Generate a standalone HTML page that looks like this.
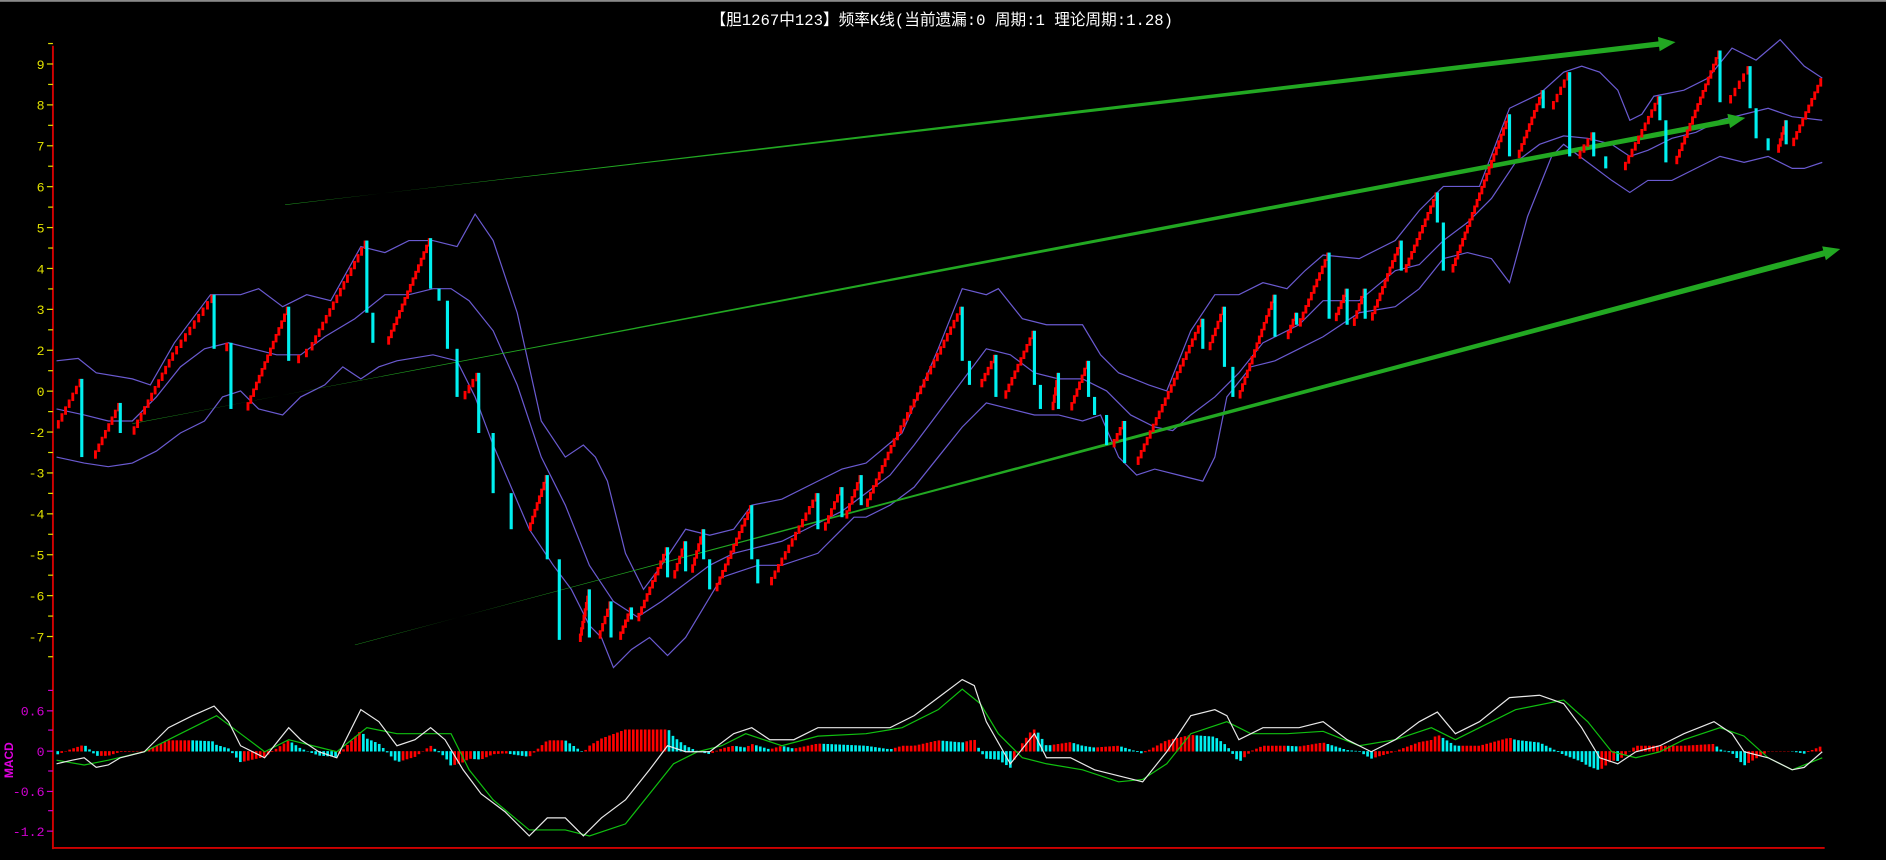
<!DOCTYPE html>
<html><head><meta charset="utf-8"><style>
html,body{margin:0;padding:0;background:#000;overflow:hidden}
svg{display:block}
</style></head><body>
<svg id="s" width="1886" height="860" viewBox="0 0 1568 715" preserveAspectRatio="none" xmlns="http://www.w3.org/2000/svg">
<rect width="1568" height="715" fill="#000"/>
<rect width="1568" height="1.5" fill="#8a8a8a"/>
<text x="783" y="21" fill="#fff" font-size="13" text-anchor="middle" font-family="Liberation Mono, 'Noto Sans CJK SC', monospace">【胆1267中123】频率K线(当前遗漏:0 周期:1 理论周期:1.28)</text>
<g id="axis"></g>
<g id="bands" fill="none" stroke="#6a5ad0" stroke-width="1"></g>
<g id="arrows" fill="#22a822"></g>
<g id="candles"></g>
<g id="macd"></g>
</svg>
<script>
var NS="http://www.w3.org/2000/svg";
function el(p,t,a){var e=document.createElementNS(NS,t);for(var k in a)e.setAttribute(k,a[k]);document.getElementById(p).appendChild(e);return e;}
function P(s){var a=s.trim().split(/\s+/).map(function(q){return q.split(',').map(Number)});return a;}
function pts(a){return a.map(function(p){return p.join(',')}).join(' ');}
el('axis','line',{x1:44,y1:38,x2:44,y2:706,stroke:'#d00000','stroke-width':1.6});
el('axis','line',{x1:44,y1:705,x2:1517,y2:705,stroke:'#d00000','stroke-width':1.6});
var labs=['9','8','7','6','5','4','3','2','0','-2','-3','-4','-5','-6','-7'];
for(var i=0;i<labs.length;i++){var y=53.2+i*34;
 el('axis','line',{x1:39,y1:y,x2:44,y2:y,stroke:'#e0e000','stroke-width':1});
 el('axis','line',{x1:40,y1:y-17,x2:44,y2:y-17,stroke:'#e0e000','stroke-width':1});
 var t=el('axis','text',{x:37,y:y+4,fill:'#e0e000','font-size':11,'text-anchor':'end','font-family':'Liberation Mono, monospace'});t.textContent=labs[i];}
el('axis','line',{x1:40,y1:546,x2:44,y2:546,stroke:'#e0e000','stroke-width':1});
var ml=[['0.6',591],['0',624.5],['-0.6',658],['-1.2',691]];
ml.forEach(function(m){el('axis','line',{x1:39,y1:m[1],x2:44,y2:m[1],stroke:'#d000d0','stroke-width':1});
 var t=el('axis','text',{x:37,y:m[1]+4,fill:'#d000d0','font-size':11,'text-anchor':'end','font-family':'Liberation Mono, monospace'});t.textContent=m[0];});
[574,607,641,674].forEach(function(y){el('axis','line',{x1:40,y1:y,x2:44,y2:y,stroke:'#d000d0','stroke-width':1});});
var mt=el('axis','text',{x:0,y:0,fill:'#e000e0','font-size':10,'font-weight':'bold','text-anchor':'middle','font-family':'Liberation Sans, sans-serif',transform:'translate(11,632) rotate(-90)'});mt.textContent='MACD';
var up=P("47,300 65,298 80,310 110,315 125,320 145,285 175,245 200,245 215,240 235,255 255,245 275,250 300,205 320,210 340,200 360,200 380,205 395,178 410,200 430,260 450,350 470,380 485,370 495,380 505,400 520,460 535,490 550,470 570,440 590,445 610,440 625,420 650,415 680,400 700,390 720,385 750,360 780,290 800,240 820,245 830,240 850,265 870,270 900,270 915,295 930,310 955,320 970,325 990,275 1010,245 1030,245 1050,235 1070,240 1085,225 1100,212 1130,215 1160,200 1180,175 1200,155 1230,155 1255,90 1280,78 1300,60 1315,55 1330,60 1345,75 1355,100 1365,95 1375,80 1400,75 1420,65 1440,40 1460,50 1480,33 1500,55 1515,65");
var mid=P("47,340 70,345 90,350 110,350 130,330 150,305 170,290 190,285 210,290 230,295 250,295 270,280 295,265 320,245 340,245 360,240 375,240 390,250 410,275 430,320 450,380 470,420 490,470 510,500 530,513 550,500 570,485 590,470 610,460 630,455 650,450 670,440 700,425 720,410 740,395 760,370 790,330 820,290 840,295 860,310 880,315 900,315 920,325 940,345 960,355 975,358 990,345 1010,330 1030,310 1050,285 1080,270 1100,250 1130,250 1160,225 1180,220 1200,200 1220,185 1240,165 1260,135 1280,120 1300,113 1320,115 1340,120 1355,130 1370,125 1390,115 1410,110 1430,100 1450,95 1470,90 1490,97 1515,100");
var lo=P("47,380 70,385 90,388 110,385 130,375 150,360 170,350 185,330 200,325 215,340 235,345 250,330 270,320 285,305 300,315 315,305 330,300 360,295 380,300 395,330 410,370 425,405 440,440 460,470 475,490 490,520 500,530 510,555 525,540 540,530 555,545 570,530 585,505 600,480 615,475 630,470 650,470 680,460 700,440 710,430 720,430 740,420 760,405 780,380 800,355 820,335 840,340 860,345 880,345 900,350 915,345 930,380 945,395 960,390 980,395 1000,400 1010,380 1020,330 1040,305 1060,300 1080,290 1100,280 1130,260 1160,255 1180,240 1200,215 1220,210 1240,215 1255,235 1270,180 1290,130 1300,120 1320,135 1340,150 1355,160 1370,150 1390,150 1410,140 1430,130 1450,135 1470,130 1490,140 1500,140 1515,135");
[up,mid,lo].forEach(function(a){el('bands','polyline',{points:pts(a)});});
function arrow(x1,y1,x2,y2,w){var dx=x2-x1,dy=y2-y1,L=Math.hypot(dx,dy),ux=dx/L,uy=dy/L,nx=-uy,ny=ux;
 var hl=14,hw=6;var bx=x2-ux*hl,by=y2-uy*hl;
 var p=[[x1,y1],[bx+nx*w/2,by+ny*w/2],[bx+nx*hw,by+ny*hw],[x2,y2],[bx-nx*hw,by-ny*hw],[bx-nx*w/2,by-ny*w/2],[x1+nx*0.4,y1+ny*0.4]];
 el('arrows','polygon',{points:pts(p)});}
arrow(237,170,1393,35,4.5);
arrow(110,352,1451,98,4.5);
arrow(295,536,1530,207,5);
var pr=P("47,355 68,315 78,380 100,335 110,360 145,293 178,245 185,290 192,285 205,340 240,255 245,300 258,290 305,200 310,260 322,285 358,198 365,240 372,250 380,290 385,330 398,310 410,360 425,410 440,440 455,395 465,465 482,532 490,490 498,530 508,500 515,530 525,505 530,515 555,455 560,480 570,450 575,475 585,440 590,465 595,490 625,420 630,465 640,485 680,410 685,440 700,405 703,430 716,395 720,420 742,370 800,255 806,300 815,320 828,295 835,330 860,275 865,320 875,340 880,310 890,340 905,300 910,330 920,345 925,370 935,350 945,385 1000,265 1005,290 1018,255 1025,305 1030,330 1060,245 1070,280 1078,260 1080,270 1105,210 1110,265 1120,240 1125,270 1135,240 1140,265 1165,200 1168,225 1195,160 1200,185 1207,225 1255,95 1262,130 1283,75 1290,90 1305,60 1312,130 1325,110 1335,130 1350,140 1380,80 1385,100 1393,135 1430,42 1437,85 1455,55 1460,90 1470,115 1478,125 1485,100 1490,120 1515,65");
for(var i=1;i<pr.length;i++){var a=pr[i-1],b=pr[i];
 if(b[1]<a[1]){var n=Math.max(1,Math.round((a[1]-b[1])/5.5));
  for(var k=0;k<n;k++){var x=a[0]+(b[0]-a[0])*(k+0.5)/n,y=a[1]+(b[1]-a[1])*(k+1)/n;
   el('candles','rect',{x:x-1.2,y:y,width:2.4,height:7,fill:'#ff0000'});}}
 else{el('candles','rect',{x:a[0]-1.3,y:a[1],width:2.6,height:b[1]-a[1],fill:'#00f0f0'});}}
var wh=P("47,635 60,632 70,630 80,638 90,636 100,630 120,625 140,605 160,595 178,587 190,600 200,620 220,630 240,605 250,615 265,625 280,630 300,590 315,600 330,620 345,615 358,605 370,615 385,640 400,660 420,675 440,695 455,680 470,680 485,695 500,680 520,665 540,640 555,620 570,625 590,625 610,610 625,605 640,615 660,615 680,605 700,605 720,605 740,605 760,595 780,580 800,565 810,570 820,600 840,635 860,610 870,630 890,630 910,640 930,645 950,650 970,625 990,595 1010,590 1020,595 1030,615 1050,605 1080,605 1100,600 1120,615 1140,625 1160,615 1180,600 1195,592 1210,610 1230,600 1255,580 1280,578 1300,585 1315,605 1330,630 1345,635 1360,625 1380,620 1400,610 1425,600 1440,610 1450,625 1470,630 1490,640 1500,638 1515,625");
var gr=P("47,632 70,636 90,632 120,625 150,610 180,595 200,610 220,625 240,615 260,620 280,625 305,605 330,610 350,610 375,610 390,640 410,665 440,690 470,690 490,695 520,685 540,660 560,635 580,625 600,620 620,610 650,620 680,612 720,610 750,605 780,590 800,573 815,585 830,610 850,630 870,635 900,640 930,650 950,648 970,635 990,610 1020,600 1040,610 1070,610 1100,608 1130,620 1160,615 1190,605 1210,615 1230,605 1260,590 1300,582 1320,600 1340,625 1360,630 1380,625 1400,615 1430,605 1450,612 1470,630 1490,640 1515,630");
function interp(a,x){for(var i=1;i<a.length;i++){if(x<=a[i][0]){var t=(x-a[i-1][0])/(a[i][0]-a[i-1][0]);return a[i-1][1]+t*(a[i][1]-a[i-1][1]);}}return a[a.length-1][1];}
var prev=0;
for(var x=48;x<=1515;x+=3.3){var h=(interp(gr,x)-interp(wh,x))*0.9;h=Math.max(-18,Math.min(18,h));
 var c=h>=prev?'#ff0000':'#00f0f0';prev=h;
 var y0=624.5,yy=y0-h;el('macd','rect',{x:x-1.1,y:Math.min(y0,yy),width:2.2,height:Math.abs(h)+0.3,fill:c});}
el('macd','polyline',{points:pts(gr),fill:'none',stroke:'#10c010','stroke-width':1});
el('macd','polyline',{points:pts(wh),fill:'none',stroke:'#e8e8e8','stroke-width':1});
</script>
</body></html>
